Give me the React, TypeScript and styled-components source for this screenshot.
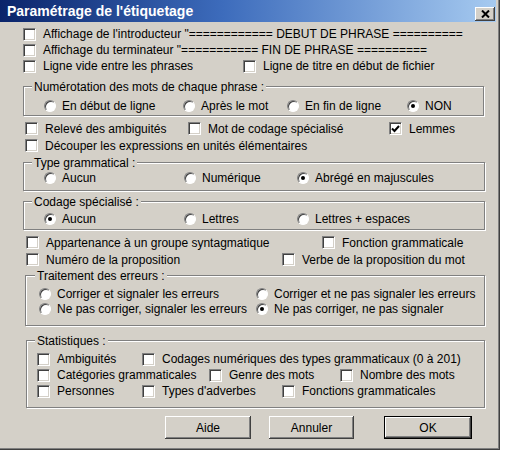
import React from "react";
import styled, { createGlobalStyle } from "styled-components";

const Global = createGlobalStyle`
  html, body { margin: 0; padding: 0; background: #ffffff; }
  body {
    font-family: "Liberation Sans", Arial, sans-serif;
    font-size: 12px;
    color: #000;
  }
`;

const FACE = "#d4d0c8";

const Dialog = styled.div`
  width: 500px;
  height: 450px;
  box-sizing: border-box;
  background: ${FACE};
  border-right: 1px solid #404040;
  border-bottom: 1px solid #404040;
  box-shadow: inset -1px -1px 0 #808080;
  padding-right: 3px;
  display: flex;
  flex-direction: column;
`;

const TitleBar = styled.div`
  height: 22px;
  flex: none;
  display: flex;
  justify-content: space-between;
  align-items: center;
  padding: 0 1px 0 7px;
  background: linear-gradient(to right, #0a246a 0%, #3d6cbc 45%, #a6caf0 100%);
`;

const Title = styled.span`
  color: #fff;
  font-weight: bold;
  font-size: 14px;
  white-space: nowrap;
`;

const CloseButton = styled.div`
  width: 20px;
  height: 14px;
  align-self: flex-end;
  margin-bottom: 1px;
  box-sizing: border-box;
  background: ${FACE};
  box-shadow: inset -1px -1px 0 #404040, inset 1px 1px 0 #fff,
    inset -2px -2px 0 #808080;
  display: flex;
  align-items: center;
  justify-content: center;
`;

const Body = styled.div`
  padding-top: 4px;
`;

const Row = styled.div<{ $cols: string; $pl: number; $h: number; $mt: number }>`
  display: grid;
  grid-template-columns: ${(p) => p.$cols};
  padding-left: ${(p) => p.$pl}px;
  height: ${(p) => p.$h}px;
  margin-top: ${(p) => p.$mt}px;
  align-items: center;
`;

const Group = styled.div<{ $ml: number; $w: number; $mt: number; $pb: number }>`
  margin: ${(p) => p.$mt}px 0 0 ${(p) => p.$ml}px;
  width: ${(p) => p.$w}px;
  box-sizing: border-box;
  border: 1px solid #808080;
  box-shadow: 1px 1px 0 #fff, inset 1px 1px 0 #fff;
  padding-bottom: ${(p) => p.$pb}px;
`;

const Caption = styled.div<{ $cl: number }>`
  margin: -8px 0 0 ${(p) => p.$cl}px;
  padding: 0 2px;
  width: fit-content;
  height: 16px;
  line-height: 16px;
  background: ${FACE};
  white-space: nowrap;
`;

const Item = styled.label<{ $gap: number }>`
  display: inline-flex;
  align-items: center;
  gap: ${(p) => p.$gap}px;
  white-space: nowrap;
  line-height: 16px;
`;

const Box = styled.span`
  width: 13px;
  height: 13px;
  flex: none;
  box-sizing: border-box;
  background: #fff;
  border: 1px solid;
  border-color: #808080 #fff #fff #808080;
  box-shadow: inset 1px 1px 0 #404040, inset -1px -1px 0 ${FACE};
  display: flex;
  align-items: center;
  justify-content: center;
`;

const Circle = styled.span`
  width: 12px;
  height: 12px;
  flex: none;
  box-sizing: border-box;
  border-radius: 50%;
  background: #fff;
  border: 1px solid;
  border-color: #808080 #fff #fff #808080;
  box-shadow: inset 1px 1px 0 #404040;
  display: flex;
  align-items: center;
  justify-content: center;
`;

const Dot = styled.span`
  width: 4px;
  height: 4px;
  border-radius: 50%;
  background: #000;
`;

const PushButton = styled.button<{ $w: number; $default?: boolean }>`
  width: ${(p) => p.$w}px;
  height: 23px;
  box-sizing: border-box;
  padding: 0;
  font: inherit;
  color: #000;
  background: ${FACE};
  border: ${(p) => (p.$default ? "1px solid #000" : "none")};
  box-shadow: inset -1px -1px 0 #404040, inset 1px 1px 0 #fff,
    inset -2px -2px 0 #808080;
`;

function layout(xs: number[], origin: number) {
  const diffs = xs.slice(1).map((x, i) => `${x - xs[i]}px`);
  return { cols: [...diffs, "auto"].join(" "), pl: xs[0] - origin };
}

type Opt = { label: string; checked?: boolean };

function Check({ label, checked }: Opt) {
  return (
    <Item $gap={7}>
      <Box>
        {checked && (
          <svg width="9" height="8" viewBox="0 0 9 8">
            <polyline points="1,3.5 3.5,6 8,1" fill="none" stroke="#000" strokeWidth="2" />
          </svg>
        )}
      </Box>
      <span>{label}</span>
    </Item>
  );
}

function Radio({ label, checked }: Opt) {
  return (
    <Item $gap={6}>
      <Circle>{checked && <Dot />}</Circle>
      <span>{label}</span>
    </Item>
  );
}

function CheckRow({ xs, items, h, mt, origin = 0 }: { xs: number[]; items: Opt[]; h: number; mt: number; origin?: number }) {
  const l = layout(xs, origin);
  return (
    <Row $cols={l.cols} $pl={l.pl} $h={h} $mt={mt}>
      {items.map((it) => (
        <Check key={it.label} {...it} />
      ))}
    </Row>
  );
}

function RadioRow({ xs, items, h, mt, origin }: { xs: number[]; items: Opt[]; h: number; mt: number; origin: number }) {
  const l = layout(xs, origin);
  return (
    <Row $cols={l.cols} $pl={l.pl} $h={h} $mt={mt}>
      {items.map((it) => (
        <Radio key={it.label} {...it} />
      ))}
    </Row>
  );
}

export default function App() {
  return (
    <>
      <Global />
      <Dialog>
        <TitleBar>
          <Title>Paramétrage de l'étiquetage</Title>
          <CloseButton>
            <svg width="9" height="8" viewBox="0 0 9 8">
              <path d="M1 0.5 L8 7.5 M8 0.5 L1 7.5" stroke="#000" strokeWidth="2" />
            </svg>
          </CloseButton>
        </TitleBar>
        <Body>
          <CheckRow xs={[23]} h={16} mt={0} items={[{ label: 'Affichage de l\'introducteur "============ DEBUT DE PHRASE ==========' }]} />
          <CheckRow xs={[23]} h={16} mt={0} items={[{ label: 'Affichage du terminateur "=========== FIN DE PHRASE ==========' }]} />
          <CheckRow
            xs={[23, 243]}
            h={16}
            mt={0}
            items={[{ label: "Ligne vide entre les phrases" }, { label: "Ligne de titre en début de fichier" }]}
          />

          <Group $ml={23} $w={461} $mt={12} $pb={1}>
            <Caption $cl={8}>Numérotation des mots de chaque phrase :</Caption>
            <RadioRow
              xs={[44, 183, 287, 407]}
              origin={24}
              h={16}
              mt={3}
              items={[
                { label: "En début de ligne" },
                { label: "Après le mot" },
                { label: "En fin de ligne" },
                { label: "NON", checked: true },
              ]}
            />
          </Group>

          <CheckRow
            xs={[25, 188, 389]}
            h={17}
            mt={4}
            items={[
              { label: "Relevé des ambiguités" },
              { label: "Mot de codage spécialisé" },
              { label: "Lemmes", checked: true },
            ]}
          />
          <CheckRow xs={[25]} h={17} mt={0} items={[{ label: "Découper les expressions en unités élémentaires" }]} />

          <Group $ml={23} $w={462} $mt={8} $pb={4}>
            <Caption $cl={8}>Type grammatical :</Caption>
            <RadioRow
              xs={[44, 184, 297]}
              origin={24}
              h={16}
              mt={-1}
              items={[{ label: "Aucun" }, { label: "Numérique" }, { label: "Abrégé en majuscules", checked: true }]}
            />
          </Group>

          <Group $ml={23} $w={462} $mt={10} $pb={2}>
            <Caption $cl={8}>Codage spécialisé :</Caption>
            <RadioRow
              xs={[44, 184, 297]}
              origin={24}
              h={16}
              mt={1}
              items={[{ label: "Aucun", checked: true }, { label: "Lettres" }, { label: "Lettres + espaces" }]}
            />
          </Group>

          <CheckRow
            xs={[26, 322]}
            h={17}
            mt={4}
            items={[{ label: "Appartenance à un groupe syntagmatique" }, { label: "Fonction grammaticale" }]}
          />
          <CheckRow
            xs={[26, 282]}
            h={17}
            mt={0}
            items={[{ label: "Numéro de la proposition" }, { label: "Verbe de la proposition du mot" }]}
          />

          <Group $ml={25} $w={460} $mt={7} $pb={8}>
            <Caption $cl={9}>Traitement des erreurs :</Caption>
            <RadioRow
              xs={[39, 256]}
              origin={26}
              h={16}
              mt={2}
              items={[{ label: "Corriger et signaler les erreurs" }, { label: "Corriger et ne pas signaler les erreurs" }]}
            />
            <RadioRow
              xs={[39, 256]}
              origin={26}
              h={16}
              mt={-1}
              items={[
                { label: "Ne pas corriger, signaler les erreurs" },
                { label: "Ne pas corriger, ne pas signaler", checked: true },
              ]}
            />
          </Group>

          <Group $ml={26} $w={459} $mt={14} $pb={8}>
            <Caption $cl={8}>Statistiques :</Caption>
            <CheckRow
              xs={[37, 142]}
              origin={27}
              h={16}
              mt={2}
              items={[{ label: "Ambiguités" }, { label: "Codages numériques des types grammaticaux (0 à 201)" }]}
            />
            <CheckRow
              xs={[37, 209, 340]}
              origin={27}
              h={16}
              mt={0}
              items={[{ label: "Catégories grammaticales" }, { label: "Genre des mots" }, { label: "Nombre des mots" }]}
            />
            <CheckRow
              xs={[37, 142, 282]}
              origin={27}
              h={16}
              mt={0}
              items={[{ label: "Personnes" }, { label: "Types d'adverbes" }, { label: "Fonctions grammaticales" }]}
            />
          </Group>

          <Row $cols="104px 115px auto" $pl={165} $h={23} $mt={8}>
            <PushButton $w={86}>Aide</PushButton>
            <PushButton $w={85}>Annuler</PushButton>
            <PushButton $w={88} $default>
              OK
            </PushButton>
          </Row>
        </Body>
      </Dialog>
    </>
  );
}
